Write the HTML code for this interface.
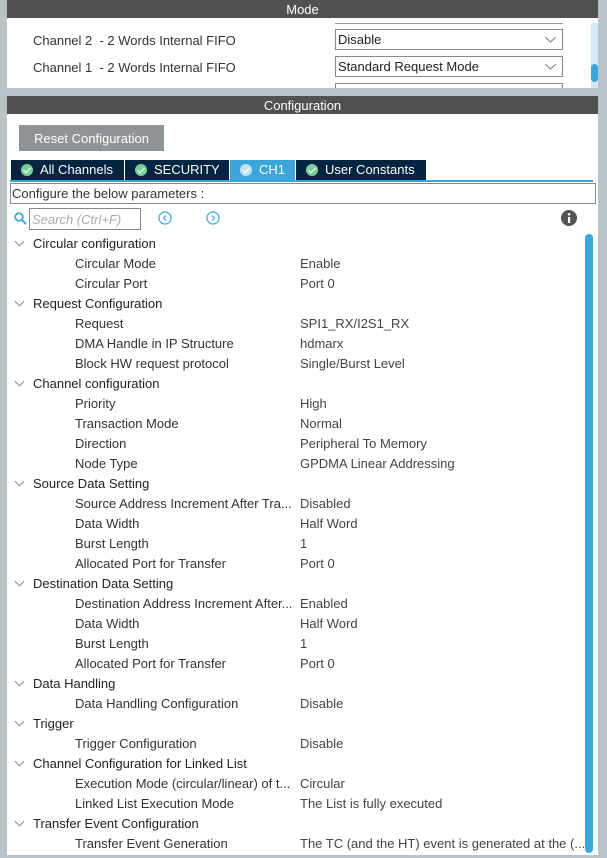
<!DOCTYPE html>
<html><head><meta charset="utf-8"><style>
*{margin:0;padding:0;box-sizing:border-box}
body{width:607px;height:858px;background:#b9c2c7;font-family:"Liberation Sans",Arial,sans-serif;font-size:13px;color:#333;position:relative;overflow:hidden}
.a{position:absolute}
.hdr{background:#515151;color:#fff;text-align:center;font-size:13px;line-height:20px;left:7px;width:591px;height:18px}
.sel{border:1px solid #888;background:#fff;left:335px;width:228px;height:21px;line-height:20px;padding-left:2px;color:#222}
.sel svg{position:absolute;right:6px;top:7px}
.tab{top:160px;height:20px;background:#04243f;color:#fff;line-height:20px;font-size:13px;padding-left:10px}
.tab i{display:inline-block;width:12px;height:12px;border-radius:50%;background:#7dcf9a;vertical-align:-2px;margin-right:7px;position:relative}
.tab i:after{content:"";position:absolute;left:4px;top:2px;width:3px;height:6px;border:solid #fff;border-width:0 1.5px 1.5px 0;transform:rotate(45deg)}
.r{position:absolute;height:20px;line-height:22px;white-space:nowrap}
.g{left:33px;color:#222}
.c{left:75px;color:#333}
.v{left:300px;color:#444}
.ch{position:absolute;left:16px;width:7px;height:7px;border:solid #888;border-width:0 1px 1px 0;transform:rotate(45deg)}
</style></head><body>
<div class="a hdr" style="top:0">Mode</div>
<div class="a" style="left:7px;top:18px;width:591px;height:70px;background:#fff"></div>
<div class="a" style="left:591px;top:23px;width:7px;height:65px;background:#d6e7f5"></div>
<div class="a" style="left:591px;top:64px;width:7px;height:18px;background:#3aa5dc;border-radius:4px"></div>
<div class="a" style="left:335px;top:23px;width:228px;height:1px;background:#999"></div>
<div class="r" style="left:33px;top:30px;color:#333">Channel 2 &nbsp;- 2 Words Internal FIFO</div>
<div class="r" style="left:33px;top:57px;color:#333">Channel 1 &nbsp;- 2 Words Internal FIFO</div>
<div class="a sel" style="top:29px">Disable<svg width="11" height="6"><path d="M0 0L5.5 5L11 0" fill="none" stroke="#777"/></svg></div>
<div class="a sel" style="top:56px">Standard Request Mode<svg width="11" height="6"><path d="M0 0L5.5 5L11 0" fill="none" stroke="#777"/></svg></div>
<div class="a sel" style="top:83px;height:5px;border-bottom:none"></div>
<div class="a hdr" style="top:96px">Configuration</div>
<div class="a" style="left:7px;top:114px;width:591px;height:741px;background:#fff"></div>
<div class="a" style="left:19px;top:125px;width:145px;height:26px;background:#8f9496;color:#fff;line-height:27px;text-align:center;font-size:13px">Reset Configuration</div>
<div class="a tab" style="left:11px;width:113px"><i></i>All Channels</div>
<div class="a tab" style="left:125px;width:104px"><i></i>SECURITY</div>
<div class="a tab" style="left:230px;width:65px;background:#3ba6d9"><i style="background:#bfe3f2"></i>CH1</div>
<div class="a tab" style="left:296px;width:130px"><i></i>User Constants</div>
<div class="a" style="left:10px;top:180px;width:583px;height:2px;background:#3ba6d9"></div>
<div class="a" style="left:10px;top:183px;width:586px;height:21px;border:1px solid #888;line-height:20px;padding-left:1px;color:#333">Configure the below parameters :</div>
<svg class="a" style="left:14px;top:212px" width="13" height="13"><circle cx="5" cy="5" r="3.8" fill="none" stroke="#3ba6d9" stroke-width="1.8"/><path d="M8 8L12 12" stroke="#3ba6d9" stroke-width="2"/></svg>
<div class="a" style="left:29px;top:208px;width:112px;height:22px;border:1px solid #888;color:#aaa;font-style:italic;line-height:21px;padding-left:2px">Search (Ctrl+F)</div>
<svg class="a" style="left:158px;top:211px" width="14" height="14"><circle cx="7" cy="7" r="6" fill="none" stroke="#3ba6d9" stroke-width="1.2"/><path d="M8 4.5L5.5 7L8 9.5" fill="none" stroke="#3ba6d9" stroke-width="1.2"/></svg>
<svg class="a" style="left:206px;top:211px" width="14" height="14"><circle cx="7" cy="7" r="6" fill="none" stroke="#3ba6d9" stroke-width="1.2"/><path d="M6 4.5L8.5 7L6 9.5" fill="none" stroke="#3ba6d9" stroke-width="1.2"/></svg>
<svg class="a" style="left:561px;top:210px" width="16" height="16"><circle cx="8" cy="8" r="8" fill="#555"/><rect x="7" y="7" width="2.2" height="6" fill="#fff"/><circle cx="8.1" cy="4.3" r="1.3" fill="#fff"/></svg>
<div class="a" style="left:585px;top:234px;width:8px;height:619px;background:#3ba6d9;border-radius:4px"></div>
<div id="t"></div>
<script>
var rows=[
["g","Circular configuration"],["c","Circular Mode","Enable"],["c","Circular Port","Port 0"],
["g","Request Configuration"],["c","Request","SPI1_RX/I2S1_RX"],["c","DMA Handle in IP Structure","hdmarx"],["c","Block HW request protocol","Single/Burst Level"],
["g","Channel configuration"],["c","Priority","High"],["c","Transaction Mode","Normal"],["c","Direction","Peripheral To Memory"],["c","Node Type","GPDMA Linear Addressing"],
["g","Source Data Setting"],["c","Source Address Increment After Tra...","Disabled"],["c","Data Width","Half Word"],["c","Burst Length","1"],["c","Allocated Port for Transfer","Port 0"],
["g","Destination Data Setting"],["c","Destination Address Increment After...","Enabled"],["c","Data Width","Half Word"],["c","Burst Length","1"],["c","Allocated Port for Transfer","Port 0"],
["g","Data Handling"],["c","Data Handling Configuration","Disable"],
["g","Trigger"],["c","Trigger Configuration","Disable"],
["g","Channel Configuration for Linked List"],["c","Execution Mode (circular/linear) of t...","Circular"],["c","Linked List Execution Mode","The List is fully executed"],
["g","Transfer Event Configuration"],["c","Transfer Event Generation","The TC (and the HT) event is generated at the (..."]];
var h="";rows.forEach(function(r,i){var y=233+i*20;
if(r[0]=="g"){h+='<div class="ch" style="top:'+(y+5)+'px"></div><div class="r g" style="top:'+y+'px">'+r[1]+'</div>';}
else{h+='<div class="r c" style="top:'+y+'px">'+r[1]+'</div><div class="r v" style="top:'+y+'px">'+r[2]+'</div>';}});
document.getElementById("t").innerHTML=h;
</script>
</body></html>
